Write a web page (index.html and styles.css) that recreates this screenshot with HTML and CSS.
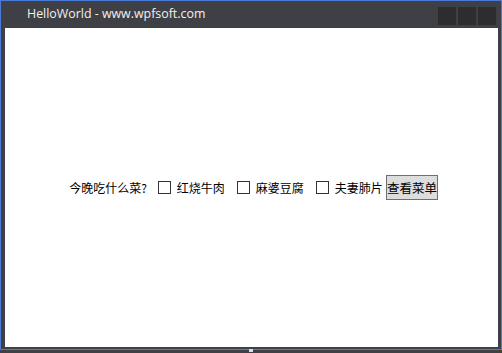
FILE: index.html
```html
<!DOCTYPE html>
<html lang="zh-CN">
  <head>
    <meta charset="UTF-8" />
    <title>HelloWorld - www.wpfsoft.com</title>
    <link rel="stylesheet" href="styles.css">
  </head>
  <body>
    <div class="window">
      <div class="titlebar">
        <span class="title">HelloWorld - www.wpfsoft.com</span>
        <div class="controls">
          <span class="control"></span>
          <span class="control"></span>
          <span class="control"></span>
        </div>
      </div>
      <div class="content">
        <div class="menu">
          <span class="question">今晚吃什么菜?</span>
          <label class="dish"><span class="box"></span>红烧牛肉</label>
          <label class="dish"><span class="box"></span>麻婆豆腐</label>
          <label class="dish"><span class="box"></span>夫妻肺片</label>
          <button class="show">查看菜单</button>
        </div>
      </div>
    </div>
    <span class="grip"></span>
  </body>
</html>
```

FILE: styles.css
```css
* {
  margin: 0;
  padding: 0;
  box-sizing: border-box;
}
body {
  background-color: #3f3f46;
  font-family: "Microsoft YaHei", "Noto Sans CJK SC", sans-serif;
  font-size: 12px;
  color: #000;
  height: 353px;
  overflow: hidden;
  position: relative;
}
.window {
  width: 502px;
  height: 350px;
  border: 1px solid #4a7bd8;
  background-color: #3f3f46;
  display: flex;
  flex-direction: column;
}
.titlebar {
  height: 27px;
  display: flex;
  align-items: center;
  justify-content: space-between;
  padding: 0 5px 2px 26px;
}
.title {
  font-family: "Open Sans", sans-serif;
  font-size: 12.4px;
  color: #f1f1f1;
}
.controls {
  display: flex;
  gap: 2px;
  align-self: flex-start;
  margin-top: 6px;
}
.control {
  width: 18px;
  height: 18px;
  background-color: #2d2d30;
}
.content {
  flex: 1;
  background-color: #fff;
  margin: 0 3px 2px 4px;
  display: flex;
  align-items: center;
  justify-content: center;
}
.menu {
  display: flex;
  align-items: center;
  margin-left: 4px;
}
.question {
  margin-right: 11px;
}
.dish {
  display: flex;
  align-items: center;
  margin-right: 12px;
}
.dish:last-of-type {
  margin-right: 3px;
}
.box {
  width: 13px;
  height: 13px;
  border: 1px solid #333;
  background-color: #fff;
  margin-right: 6px;
}
.show {
  font-family: inherit;
  font-size: 12.5px;
  width: 52px;
  height: 25px;
  background-color: #dddddd;
  border: 1px solid #707070;
  color: #000;
}
.grip {
  position: absolute;
  left: 249px;
  top: 349px;
  width: 4px;
  height: 3px;
  background-color: #cfe0ff;
}
```
